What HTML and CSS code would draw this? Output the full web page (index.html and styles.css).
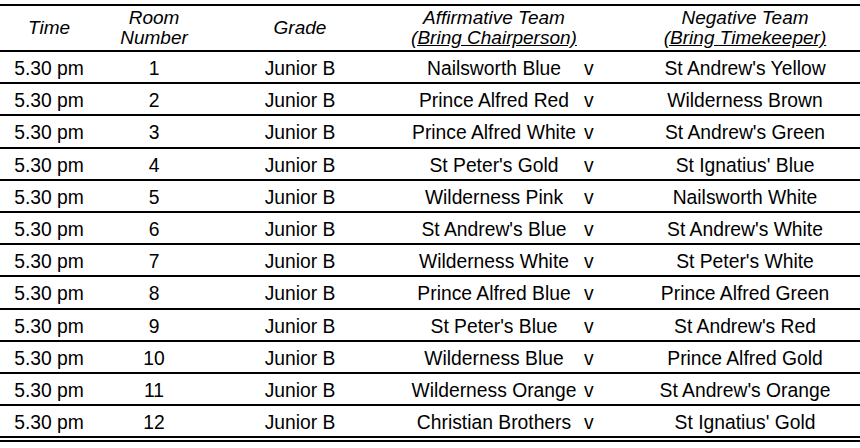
FILE: index.html
```html
<!DOCTYPE html>
<html>
<head>
<meta charset="utf-8">
<link rel="stylesheet" href="styles.css">
</head>
<body>
<table class="fixtures">
  <colgroup>
    <col class="c-time"><col class="c-room"><col class="c-grade"><col class="c-aff"><col class="c-vs"><col class="c-neg">
  </colgroup>
  <thead>
    <tr>
      <th>Time</th>
      <th>Room<br>Number</th>
      <th>Grade</th>
      <th class="aff">Affirmative Team<br><span class="u">(Bring Chairperson)</span></th>
      <th></th>
      <th>Negative Team<br><span class="u">(Bring Timekeeper)</span></th>
    </tr>
  </thead>
  <tbody>
    <tr><td>5.30 pm</td><td>1</td><td>Junior B</td><td class="aff">Nailsworth Blue</td><td class="vs">v</td><td>St Andrew's Yellow</td></tr>
    <tr><td>5.30 pm</td><td>2</td><td>Junior B</td><td class="aff">Prince Alfred Red</td><td class="vs">v</td><td>Wilderness Brown</td></tr>
    <tr><td>5.30 pm</td><td>3</td><td>Junior B</td><td class="aff">Prince Alfred White</td><td class="vs">v</td><td>St Andrew's Green</td></tr>
    <tr><td>5.30 pm</td><td>4</td><td>Junior B</td><td class="aff">St Peter's Gold</td><td class="vs">v</td><td>St Ignatius' Blue</td></tr>
    <tr><td>5.30 pm</td><td>5</td><td>Junior B</td><td class="aff">Wilderness Pink</td><td class="vs">v</td><td>Nailsworth White</td></tr>
    <tr><td>5.30 pm</td><td>6</td><td>Junior B</td><td class="aff">St Andrew's Blue</td><td class="vs">v</td><td>St Andrew's White</td></tr>
    <tr><td>5.30 pm</td><td>7</td><td>Junior B</td><td class="aff">Wilderness White</td><td class="vs">v</td><td>St Peter's White</td></tr>
    <tr><td>5.30 pm</td><td>8</td><td>Junior B</td><td class="aff">Prince Alfred Blue</td><td class="vs">v</td><td>Prince Alfred Green</td></tr>
    <tr><td>5.30 pm</td><td>9</td><td>Junior B</td><td class="aff">St Peter's Blue</td><td class="vs">v</td><td>St Andrew's Red</td></tr>
    <tr><td>5.30 pm</td><td>10</td><td>Junior B</td><td class="aff">Wilderness Blue</td><td class="vs">v</td><td>Prince Alfred Gold</td></tr>
    <tr><td>5.30 pm</td><td>11</td><td>Junior B</td><td class="aff">Wilderness Orange</td><td class="vs">v</td><td>St Andrew's Orange</td></tr>
    <tr class="last"><td>5.30 pm</td><td>12</td><td>Junior B</td><td class="aff">Christian Brothers</td><td class="vs">v</td><td>St Ignatius' Gold</td></tr>
  </tbody>
</table>
</body>
</html>
```
FILE: styles.css
```css
html, body {
  margin: 0;
  padding: 0;
  background: #fff;
}
body {
  padding-top: 4px;
  font-family: "Liberation Sans", Arial, sans-serif;
  color: #000;
}
.fixtures {
  width: 860px;
  table-layout: fixed;
  border-collapse: collapse;
  font-size: 19.3px;
}
.c-time { width: 98px; }
.c-room { width: 112px; }
.c-grade { width: 180px; }
.c-aff { width: 188px; }
.c-vs { width: 52px; }
.c-neg { width: 230px; }

.fixtures th {
  font-weight: normal;
  font-style: italic;
  font-size: 19px;
  text-align: center;
  line-height: 20px;
  height: 44px;
  padding: 0;
  border-top: 2px solid #000;
  border-bottom: 2px solid #000;
  white-space: nowrap;
  vertical-align: middle;
}
.fixtures th .u {
  text-decoration: underline;
}
.fixtures td {
  text-align: center;
  height: 26.2px;
  padding: 4px 0 0;
  line-height: 20px;
  border-bottom: 2px solid #000;
  white-space: nowrap;
  vertical-align: middle;
}
.fixtures .aff {
  padding-left: 20px;
}
.fixtures td.vs {
  text-align: left;
  padding-left: 6px;
}
.fixtures tr.last td {
  border-bottom: 6px double #000;
}
```
